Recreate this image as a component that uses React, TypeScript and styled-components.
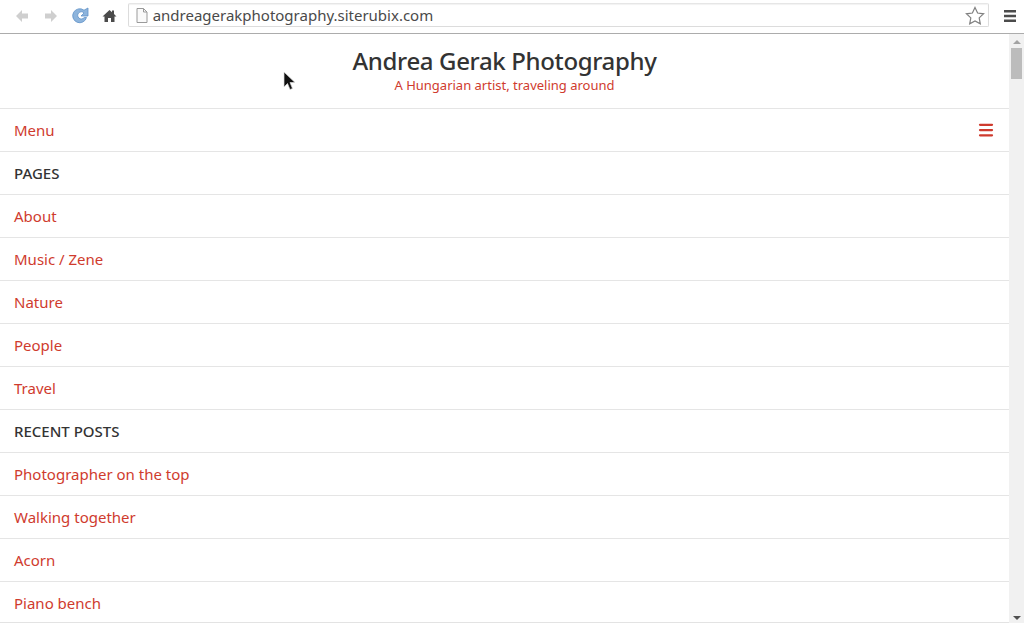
import * as React from 'react'
import styled, { createGlobalStyle } from 'styled-components'
import { Menu as MenuIcon } from 'lucide-react'

const GlobalStyle = createGlobalStyle`
  html, body {
    margin: 0;
    padding: 0;
    height: 100%;
    overflow: hidden;
    background: #fff;
  }
`

const Window = styled.div`
  position: relative;
  width: 1024px;
  height: 623px;
  display: flex;
  flex-direction: column;
  overflow: hidden;
  font-family: 'Noto Sans', sans-serif;
`

const Toolbar = styled.div`
  flex: 0 0 31px;
  display: flex;
  align-items: center;
  background: #fff;
  border-bottom: 1px solid #acacac;
  padding: 0 0 2px 8px;
  box-sizing: content-box;
  height: 29px;
`

const NavButton = styled.div`
  width: 29px;
  height: 20px;
  display: flex;
  align-items: center;
  justify-content: center;
  margin-left: ${p => p.$offset || 0}px;
`

const Omnibox = styled.div`
  margin-left: 4px;
  width: 864px;
  height: 24px;
  box-sizing: border-box;
  border: 1px solid #dcdcdc;
  border-top-color: #e6e6e6;
  border-radius: 2px;
  margin-top: -1px;
  display: flex;
  align-items: center;
  padding: 0 3px 0 7px;
  font-size: 15px;
  color: #4a4a4a;
  box-shadow: inset 0 1px 1px #f2f2f2;
`

const Address = styled.span`
  margin-left: 5px;
  flex: 1;
  letter-spacing: 0;
`

const Content = styled.div`
  flex: 1;
  display: flex;
  min-height: 0;
`

const Page = styled.main`
  flex: 1;
  min-width: 0;
  overflow: hidden;
`

const Masthead = styled.header`
  height: 74px;
  box-sizing: border-box;
  padding-top: 11px;
  text-align: center;
`

const SiteTitle = styled.h1`
  margin: 0;
  font-size: 24px;
  line-height: 32px;
  font-weight: 500;
  color: #333;
  letter-spacing: -0.35px;
`

const Tagline = styled.div`
  font-size: 13px;
  line-height: 17px;
  color: #cf3b2e;
  margin-top: 0;
`

const Row = styled.div`
  height: 43px;
  box-sizing: border-box;
  border-top: 1px solid #e5e5e5;
  padding: 0 14px;
  display: flex;
  align-items: center;
  justify-content: space-between;
  font-size: 15px;
  color: ${p => (p.$heading ? '#333' : '#cf3b2e')};
  font-weight: ${p => (p.$heading ? 500 : 400)};
`

const Scrollbar = styled.div`
  flex: 0 0 15px;
  background: #f1f1f1;
  display: flex;
  flex-direction: column;
  align-items: center;
  padding-top: 6px;
  box-sizing: border-box;
`

const Arrow = styled.div`
  width: 0;
  height: 0;
  border-left: 4px solid transparent;
  border-right: 4px solid transparent;
  border-${p => (p.$down ? 'top' : 'bottom')}: 4px solid ${p => (p.$down ? '#505050' : '#a3a3a3')};
`

const Thumb = styled.div`
  width: 11px;
  height: 31px;
  margin-top: 4px;
  background: #bcbcbc;
  border: 0;
`

const ScrollGap = styled.div`
  flex: 1;
`

const DownArrow = styled(Arrow)`
  margin-bottom: 3px;
`

const Cursor = styled.svg`
  position: absolute;
  left: 283px;
  top: 71px;
`

const FoldShadow = styled.div`
  position: absolute;
  left: 0;
  right: 15px;
  bottom: 0;
  height: 1px;
  background: #e3e3e3;
`

const pages = ['About', 'Music / Zene', 'Nature', 'People', 'Travel']
const posts = ['Photographer on the top', 'Walking together', 'Acorn', 'Piano bench']

export default function App(): JSX.Element {
  return (
    <Window>
      <GlobalStyle />
      <Toolbar>
        <NavButton>
          <svg width="16" height="14" viewBox="0 0 16 14">
            <path d="M8 1 2 7l6 6V9.5h6v-5H8z" fill="#cfcfcf" />
          </svg>
        </NavButton>
        <NavButton>
          <svg width="16" height="14" viewBox="0 0 16 14">
            <path d="M8 1l6 6-6 6V9.5H2v-5h6z" fill="#cfcfcf" />
          </svg>
        </NavButton>
        <NavButton>
          <svg width="18" height="18" viewBox="0 0 18 18">
            <path
              d="M15.5 10.5A7 7 0 1 1 13 3.2L17 1v8h-7l3-3a3.6 3.6 0 1 0 .2 4.5z"
              fill="#8db4dc"
              stroke="#5f92c8"
              strokeWidth="0.8"
            />
          </svg>
        </NavButton>
        <NavButton>
          <svg width="15" height="14" viewBox="0 0 15 14">
            <path d="M7.5 1 0.5 7.5h2V13h3.5V9h3v4h3.500V7.500h2L12 5V1.500h-2v1.700z" fill="#4b4b4b" />
          </svg>
        </NavButton>
        <Omnibox>
          <svg width="12" height="15" viewBox="0 0 12 15">
            <path d="M1 .5h6.500L11 4v10.500H1z" fill="#fafafa" stroke="#9a9a9a" />
            <path d="M7.500.5V4H11" fill="none" stroke="#9a9a9a" />
          </svg>
          <Address>andreagerakphotography.siterubix.com</Address>
          <svg width="20" height="19" viewBox="0 0 20 19">
            <path
              d="M10 1.500l2.600 5.500 6 .8-4.400 4.100 1.100 5.900L10 14.900l-5.300 2.900 1.100-5.900L1.400 7.800l6-.8z"
              fill="#fff"
              stroke="#808080"
              strokeWidth="1.200"
            />
          </svg>
        </Omnibox>
        <NavButton $offset={6}>
          <svg width="14" height="12" viewBox="0 0 14 12">
            <path d="M1 0h12v2.500H1zM1 4.700h12v2.500H1zM1 9.400h12v2.500H1z" fill="#4b4b4b" />
          </svg>
        </NavButton>
      </Toolbar>
      <Content>
        <Page>
          <Masthead>
            <SiteTitle>Andrea Gerak Photography</SiteTitle>
            <Tagline>A Hungarian artist, traveling around</Tagline>
          </Masthead>
          <Row>
            Menu
            <MenuIcon size={18} strokeWidth={3} color="#cf3b2e" />
          </Row>
          <Row $heading>PAGES</Row>
          {pages.map(title => (
            <Row key={title}>{title}</Row>
          ))}
          <Row $heading>RECENT POSTS</Row>
          {posts.map(title => (
            <Row key={title}>{title}</Row>
          ))}
        </Page>
        <Scrollbar>
          <Arrow />
          <Thumb />
          <ScrollGap />
          <DownArrow $down />
        </Scrollbar>
      </Content>
      <FoldShadow />
      <Cursor width="13" height="20" viewBox="0 0 13 20">
        <path d="M1 1v15l3.500-3.500 2.500 6 2.500-1-2.500-6H12z" fill="#111" stroke="#ddd" strokeWidth="0.7" />
      </Cursor>
    </Window>
  )
}
